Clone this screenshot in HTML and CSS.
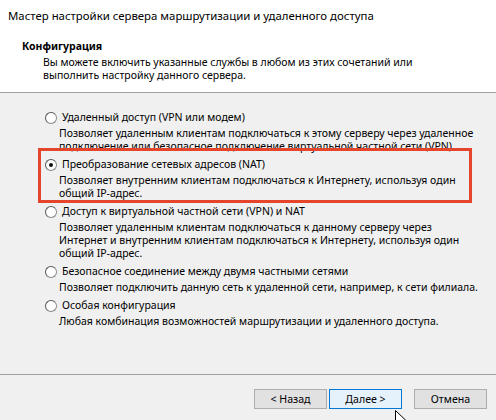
FILE: index.html
```html
<!DOCTYPE html>
<html lang="ru">
<head>
<meta charset="utf-8">
<title>Мастер настройки сервера маршрутизации и удаленного доступа</title>
<link rel="stylesheet" href="styles.css">
</head>
<body>
<div class="wizard">
  <div class="header">
    <div class="title">Мастер настройки сервера маршрутизации и удаленного доступа</div>
    <div class="section">Конфигурация</div>
    <div class="intro">Вы можете включить указанные службы в любом из этих сочетаний или<br>выполнить настройку данного сервера.</div>
  </div>
  <div class="main">
    <div class="option">
      <div class="label"><span class="radio"></span>Удаленный доступ (VPN или модем)</div>
      <div class="desc">Позволяет удаленным клиентам подключаться к этому серверу через удаленное<br>подключение или безопасное подключение виртуальной частной сети (VPN)</div>
    </div>
    <div class="option highlighted">
      <div class="label"><span class="radio checked"></span>Преобразование сетевых адресов (NAT)</div>
      <div class="desc">Позволяет внутренним клиентам подключаться к Интернету, используя один<br>общий IP-адрес.</div>
      <div class="mark"></div>
    </div>
    <div class="option">
      <div class="label"><span class="radio"></span>Доступ к виртуальной частной сети (VPN) и NAT</div>
      <div class="desc">Позволяет удаленным клиентам подключаться к данному серверу через<br>Интернет и внутренним клиентам подключаться к Интернету, используя один<br>общий IP-адрес.</div>
    </div>
    <div class="option">
      <div class="label"><span class="radio"></span>Безопасное соединение между двумя частными сетями</div>
      <div class="desc">Позволяет подключить данную сеть к удаленной сети, например, к сети филиала.</div>
    </div>
    <div class="option">
      <div class="label"><span class="radio"></span>Особая конфигурация</div>
      <div class="desc">Любая комбинация возможностей маршрутизации и удаленного доступа.</div>
    </div>
  </div>
  <div class="footer">
    <button class="btn">&lt; Назад</button>
    <button class="btn focus">Далее &gt;</button>
    <button class="btn cancel">Отмена</button>
    <svg class="cursor" width="14" height="20" viewBox="0 0 14 20"><path d="M0.5 0.5 L0.5 15.5 L4 12 L6.5 18 L9 17 L6.5 11 L11.5 11 Z" fill="#fff" stroke="#000" stroke-width="1"/></svg>
  </div>
</div>
</body>
</html>
```
FILE: styles.css
```css
html, body {
  margin: 0;
  padding: 0;
}
body {
  width: 496px;
  height: 420px;
  overflow: hidden;
  background: #f0f0f0;
  font-family: "Noto Sans", "DejaVu Sans", sans-serif;
  font-size: 10.5px;
  line-height: 13px;
  color: #000;
}
.wizard {
  display: flex;
  flex-direction: column;
  height: 420px;
}
.header {
  background: #fff;
  border-bottom: 1px solid #a0a0a0;
  padding: 9px 0 0 8px;
  box-sizing: content-box;
  height: 83px;
  white-space: nowrap;
}
.title {
  font-size: 11.4px;
}
.section {
  font-weight: bold;
  margin: 18px 0 0 14px;
}
.intro {
  margin: 3px 0 0 35px;
}
.main {
  padding: 18px 0 0 0;
  flex: 1;
  white-space: nowrap;
}
.option {
  position: relative;
  margin-bottom: 5px;
}
.label {
  display: flex;
  align-items: center;
  padding-left: 45px;
}
.radio {
  width: 12px;
  height: 12px;
  box-sizing: border-box;
  border-radius: 50%;
  border: 1px solid #8a8a8a;
  border-top-color: #555;
  border-left-color: #555;
  background: #fff;
  margin-right: 5px;
  position: relative;
  flex: none;
}
.radio.checked::after {
  content: "";
  position: absolute;
  left: 3px;
  top: 3px;
  width: 4px;
  height: 4px;
  border-radius: 50%;
  background: #111;
}
.desc {
  margin: 3px 0 0 59px;
}
.mark {
  position: absolute;
  left: 38px;
  top: -10px;
  width: 434px;
  height: 55px;
  border: 3px solid #e5452a;
  box-sizing: border-box;
}
.footer {
  height: 46px;
  border-top: 1px solid #a0a0a0;
  display: flex;
  align-items: flex-start;
  justify-content: flex-end;
  padding: 14px 9px 0 0;
  box-sizing: border-box;
  position: relative;
}
.btn {
  width: 73px;
  height: 20px;
  margin: 0;
  padding: 0;
  border: 1px solid #adadad;
  background: #e1e1e1;
  font-family: inherit;
  font-size: 10.6px;
  color: #000;
}
.btn.focus {
  margin-left: 2px;
  border-color: #0078d7;
  background: #e5f1fb;
}
.btn.cancel {
  margin-left: 12px;
}
.cursor {
  position: absolute;
  left: 395px;
  top: 35px;
}
```
